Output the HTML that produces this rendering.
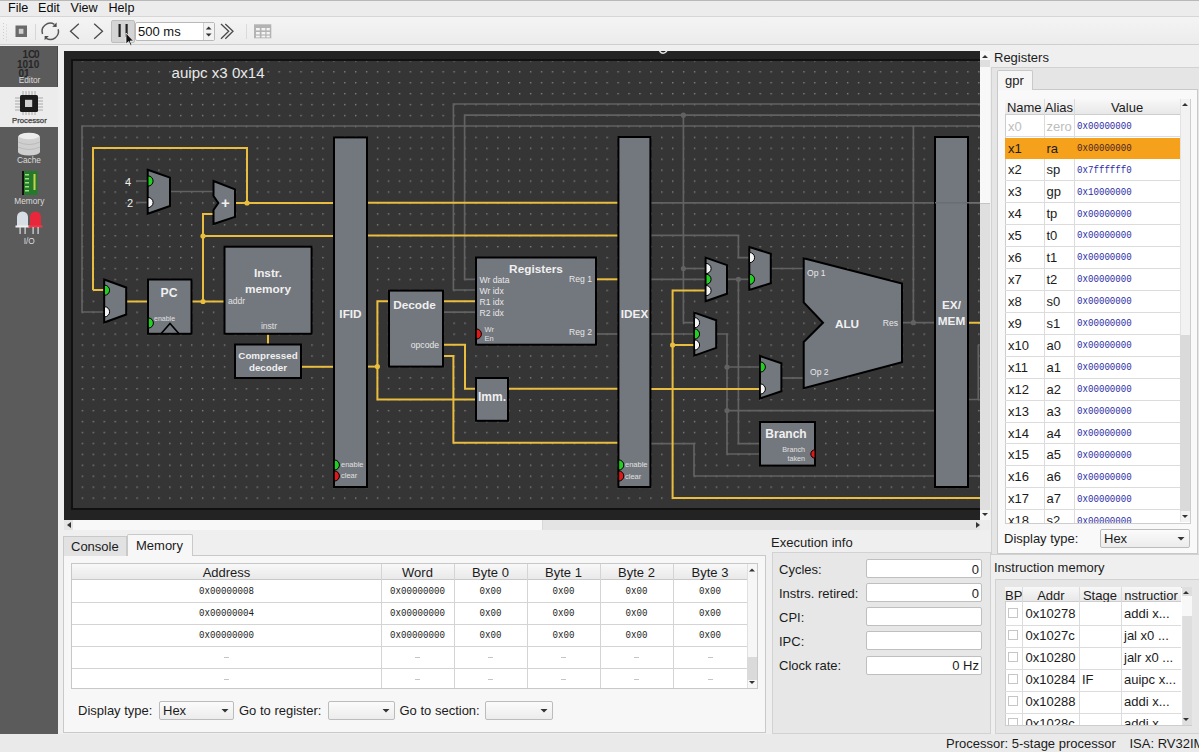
<!DOCTYPE html>
<html><head><meta charset="utf-8">
<style>
*{margin:0;padding:0;box-sizing:border-box}
html,body{width:1199px;height:752px;overflow:hidden;background:#efefef;font-family:"Liberation Sans",sans-serif;font-size:13px;color:#1b1b1b}
body{position:relative}
.a{position:absolute}
.t{position:absolute;white-space:nowrap;line-height:1}
.mono{font-family:"Liberation Mono",monospace}
</style></head><body>

<div class="a" style="left:0;top:0;width:1199px;height:1px;background:#b8b8b8"></div>
<div class="a" style="left:0;top:1px;width:1199px;height:16px;background:#ececec"></div>
<div class="a" style="left:0;top:16px;width:1199px;height:1px;background:#d6d6d6"></div>
<div class="t" style="left:8px;top:1.6px;font-size:12.6px;color:#0a0a0a">File</div>
<div class="t" style="left:38px;top:1.6px;font-size:12.6px;color:#0a0a0a">Edit</div>
<div class="t" style="left:70.5px;top:1.6px;font-size:12.6px;color:#0a0a0a">View</div>
<div class="t" style="left:108.5px;top:1.6px;font-size:12.6px;color:#0a0a0a">Help</div>
<div class="a" style="left:0;top:17px;width:1199px;height:27px;background:linear-gradient(#f4f4f4,#ececec)"></div>
<div class="a" style="left:0;top:44px;width:1199px;height:1px;background:#cfcfcf"></div>
<div class="a" style="left:111px;top:20px;width:24px;height:23px;background:#d4d4d4;border:1px solid #bdbdbd;border-radius:2px"></div>
<div class="a" style="left:135px;top:22px;width:80px;height:19px;background:#fff;border:1px solid #b9b9b9;border-radius:2px"></div>
<div class="a" style="left:203px;top:23px;width:11px;height:17px;background:#f3f3f3;border-left:1px solid #d0d0d0"></div>
<div class="t" style="left:138px;top:25px;font-size:13px;color:#111">500 ms</div>
<svg class="a" style="left:0;top:0" width="300" height="50">
<rect x="15.5" y="25.5" width="11.5" height="11.5" fill="#6a6a6a"/>
<rect x="18.8" y="28.8" width="4.6" height="5" fill="#cfcfcf"/>
<line x1="35.5" y1="24" x2="35.5" y2="40" stroke="#d6d6d6" stroke-width="1"/>
<g fill="#cdcdcd"><rect x="3" y="23" width="1" height="1"/><rect x="6" y="24.5" width="1" height="1"/><rect x="3" y="26" width="1" height="1"/><rect x="6" y="27.5" width="1" height="1"/><rect x="3" y="29" width="1" height="1"/><rect x="6" y="30.5" width="1" height="1"/><rect x="3" y="32" width="1" height="1"/><rect x="6" y="33.5" width="1" height="1"/><rect x="3" y="35" width="1" height="1"/><rect x="6" y="36.5" width="1" height="1"/><rect x="3" y="38" width="1" height="1"/><rect x="6" y="39.5" width="1" height="1"/></g>
<path d="M42.5 33.9 A8.2 8.2 0 0 1 54.4 24.3" fill="none" stroke="#575757" stroke-width="1.5"/>
<path d="M58.2 29.3 A8.2 8.2 0 0 1 46.2 38.4" fill="none" stroke="#575757" stroke-width="1.5"/>
<path d="M56.6 22.6 L56.6 26.9 L52.2 26.8 Z" fill="#4a4a4a"/>
<path d="M44.6 35.9 L48.8 36 L44.6 40.2 Z" fill="#4a4a4a"/>
<polyline points="78.8,23.8 70.5,31.3 78.8,38.8" fill="none" stroke="#4a4a4a" stroke-width="1.3"/>
<polyline points="94.2,23.8 102.5,31.3 94.2,38.8" fill="none" stroke="#4a4a4a" stroke-width="1.3"/>
<rect x="118.5" y="24" width="2.2" height="13" fill="#222"/>
<rect x="125.5" y="24" width="2.2" height="13" fill="#222"/>
<path d="M205.8 29.5 L208.7 26.5 L211.6 29.5 Z" fill="#333"/>
<path d="M205.8 33.5 L208.7 36.5 L211.6 33.5 Z" fill="#333"/>
<polyline points="221,24 228.7,31.3 221,38.7" fill="none" stroke="#4a4a4a" stroke-width="1.3"/>
<polyline points="225.3,24 233,31.3 225.3,38.7" fill="none" stroke="#4a4a4a" stroke-width="1.3"/>
<line x1="246.5" y1="24" x2="246.5" y2="39" stroke="#dadada" stroke-width="1"/>
<rect x="254" y="24.3" width="17.3" height="14" fill="#b3b3b3"/>
<g fill="#f4f4f4">
<rect x="256" y="28" width="3.8" height="2.4"/><rect x="261.5" y="28" width="3.8" height="2.4"/><rect x="266.5" y="28" width="3.3" height="2.4"/>
<rect x="256" y="32" width="3.8" height="2.4"/><rect x="261.5" y="32" width="3.8" height="2.4"/><rect x="266.5" y="32" width="3.3" height="2.4"/>
<rect x="256" y="35.6" width="3.8" height="1.8"/><rect x="261.5" y="35.6" width="3.8" height="1.8"/><rect x="266.5" y="35.6" width="3.3" height="1.8"/>
</g>
<path d="M126 33 L126 44 L128.6 41.6 L130.6 45.6 L132 45 L130 41 L133.5 41 Z" fill="#111" stroke="#fff" stroke-width="0.7"/>
</svg>
<div class="a" style="left:0;top:46px;width:58px;height:688px;background:#5b5b5b"></div>
<div class="a" style="left:0;top:87px;width:58px;height:40px;background:#ececec"></div>
<div class="a" style="left:57px;top:46px;width:1px;height:41px;background:#4a4a4a"></div>
<svg class="a" style="left:0;top:40px" width="60" height="210" viewBox="0 40 60 210">
<g font-family="Liberation Sans" font-weight="bold" fill="#262626" font-size="10">
<text x="22.5" y="58">1</text><text x="28" y="58">C</text><text x="34" y="58">0</text>
<text x="17" y="67.5">1010</text>
<text x="18.5" y="76.5">01</text>
</g>
<text x="29.5" y="83" text-anchor="middle" font-family="Liberation Sans" font-size="8.3" fill="#dcdcdc">Editor</text>
<g stroke="#9a9a9a" stroke-width="0.8">
<line x1="23" y1="91" x2="23" y2="115"/><line x1="26" y1="91" x2="26" y2="115"/><line x1="29" y1="91" x2="29" y2="115"/><line x1="32" y1="91" x2="32" y2="115"/><line x1="35" y1="91" x2="35" y2="115"/>
<line x1="15" y1="98" x2="43" y2="98"/><line x1="15" y1="101" x2="43" y2="101"/><line x1="15" y1="104" x2="43" y2="104"/><line x1="15" y1="107" x2="43" y2="107"/><line x1="15" y1="110" x2="43" y2="110"/>
</g>
<rect x="20" y="95" width="18" height="17" rx="1.5" fill="#1c1c1c"/>
<rect x="25" y="99.8" width="7.2" height="7.2" fill="#d0d0d0"/>
<text x="29.4" y="122.8" text-anchor="middle" font-family="Liberation Sans" font-size="7.7" fill="#3a3a3a" stroke="#3a3a3a" stroke-width="0.25">Processor</text>
<ellipse cx="29" cy="137" rx="11" ry="4" fill="#e6e6e6"/>
<rect x="18" y="137" width="22" height="15" fill="#cfcfcf"/>
<ellipse cx="29" cy="152" rx="11" ry="3.5" fill="#cfcfcf"/>
<ellipse cx="29" cy="136" rx="10" ry="3.3" fill="#ececec"/>
<path d="M18 142 Q29 147 40 142 M18 147 Q29 152 40 147" stroke="#b5b5b5" stroke-width="0.8" fill="none"/>
<text x="29" y="162.5" text-anchor="middle" font-family="Liberation Sans" font-size="8.3" fill="#dcdcdc">Cache</text>
<rect x="22" y="171" width="2" height="24" fill="#111"/>
<rect x="24" y="171" width="13.5" height="24" fill="#247a2a"/>
<g fill="#9be07a"><rect x="25" y="174" width="4" height="1.5"/><rect x="25" y="178" width="4" height="1.5"/><rect x="25" y="182" width="4" height="1.5"/><rect x="25" y="186" width="4" height="1.5"/><rect x="25" y="190" width="4" height="1.5"/></g>
<rect x="33.5" y="174" width="2" height="16" fill="#c9d24a"/>
<text x="29.3" y="203.5" text-anchor="middle" font-family="Liberation Sans" font-size="8.3" fill="#dcdcdc">Memory</text>
<path d="M17 226 L17 217 A5.5 5.5 0 0 1 28 217 L28 226 Z" fill="#d7dde4"/>
<rect x="15.5" y="225.5" width="14" height="2" fill="#f0f0f0"/>
<rect x="19.5" y="227" width="1.2" height="7" fill="#ddd"/><rect x="24.5" y="227" width="1.2" height="7" fill="#ddd"/>
<path d="M30 226 L30 217 A5.5 5.5 0 0 1 41 217 L41 226 Z" fill="#e8283a"/>
<rect x="28.5" y="225.5" width="14" height="2" fill="#f03a4a"/>
<rect x="32.5" y="227" width="1.2" height="7" fill="#ddd"/><rect x="37.5" y="227" width="1.2" height="7" fill="#ddd"/>
<text x="29.3" y="243.5" text-anchor="middle" font-family="Liberation Sans" font-size="8.3" fill="#dcdcdc">I/O</text>
</svg>
<div class="a" style="left:64px;top:51px;width:916px;height:469px;background:#232323"></div>
<div class="a" style="left:71px;top:59px;width:909px;height:451px;background:#111"></div>
<div class="a" style="left:73px;top:61px;width:907px;height:447px;overflow:hidden;background:#353535">
<svg class="a" style="left:-73px;top:-61px" width="1000" height="520" viewBox="0 0 1000 520">
<defs><pattern id="dots" x="81.7" y="71.1" width="10.932" height="10.93" patternUnits="userSpaceOnUse"><rect x="0" y="0" width="1.4" height="1.4" fill="#808080"/></pattern></defs>
<rect x="73" y="61" width="907" height="447" fill="url(#dots)"/>
<polyline points="1000,126 82,126 82,312 104,312" fill="none" stroke="#626262" stroke-width="1.7" stroke-linejoin="miter"/>
<polyline points="1000,104 453.4,104 453.4,290 476,290" fill="none" stroke="#626262" stroke-width="1.7" stroke-linejoin="miter"/>
<polyline points="1000,115.2 464.6,115.2 464.6,279.3 476,279.3" fill="none" stroke="#626262" stroke-width="1.7" stroke-linejoin="miter"/>
<polyline points="683.4,115.2 683.4,322.7 694,322.7" fill="none" stroke="#626262" stroke-width="1.7" stroke-linejoin="miter"/>
<polyline points="683.4,268.5 705,268.5" fill="none" stroke="#626262" stroke-width="1.7" stroke-linejoin="miter"/>
<polyline points="170,191.5 214,191.5" fill="none" stroke="#626262" stroke-width="1.7" stroke-linejoin="miter"/>
<polyline points="136,181 148,181" fill="none" stroke="#626262" stroke-width="1.7" stroke-linejoin="miter"/>
<polyline points="136,202.5 148,202.5" fill="none" stroke="#626262" stroke-width="1.7" stroke-linejoin="miter"/>
<polyline points="443,312.2 476,312.2" fill="none" stroke="#626262" stroke-width="1.7" stroke-linejoin="miter"/>
<polyline points="596,334 618,334" fill="none" stroke="#626262" stroke-width="1.7" stroke-linejoin="miter"/>
<polyline points="650,279.3 705,279.3" fill="none" stroke="#626262" stroke-width="1.7" stroke-linejoin="miter"/>
<polyline points="650,334 694,334" fill="none" stroke="#626262" stroke-width="1.7" stroke-linejoin="miter"/>
<polyline points="650,202.8 1000,202.8" fill="none" stroke="#626262" stroke-width="1.7" stroke-linejoin="miter"/>
<polyline points="650,235.4 738.4,235.4 738.4,257.6 749,257.6" fill="none" stroke="#626262" stroke-width="1.7" stroke-linejoin="miter"/>
<polyline points="738.4,279.3 738.4,443.7 760,443.7" fill="none" stroke="#626262" stroke-width="1.7" stroke-linejoin="miter"/>
<polyline points="727,279.3 749,279.3" fill="none" stroke="#626262" stroke-width="1.7" stroke-linejoin="miter"/>
<polyline points="771,268.5 804,268.5" fill="none" stroke="#626262" stroke-width="1.7" stroke-linejoin="miter"/>
<polyline points="716,334 727,334 727,454 760,454" fill="none" stroke="#626262" stroke-width="1.7" stroke-linejoin="miter"/>
<polyline points="727,367 760,367" fill="none" stroke="#626262" stroke-width="1.7" stroke-linejoin="miter"/>
<polyline points="727,410.6 935,410.6" fill="none" stroke="#626262" stroke-width="1.7" stroke-linejoin="miter"/>
<polyline points="781,378 804,378" fill="none" stroke="#626262" stroke-width="1.7" stroke-linejoin="miter"/>
<polyline points="650,443.7 694,443.7 694,476 1000,476" fill="none" stroke="#626262" stroke-width="1.7" stroke-linejoin="miter"/>
<polyline points="902,322.7 935,322.7" fill="none" stroke="#626262" stroke-width="1.7" stroke-linejoin="miter"/>
<polyline points="913.4,126 913.4,322.7" fill="none" stroke="#626262" stroke-width="1.7" stroke-linejoin="miter"/>
<polyline points="967,399.5 978.3,399.5 978.3,344.7" fill="none" stroke="#626262" stroke-width="1.7" stroke-linejoin="miter"/>
<circle cx="683.4" cy="115.2" r="2.6" fill="#626262"/>
<circle cx="683.4" cy="268.5" r="2.6" fill="#626262"/>
<circle cx="738.4" cy="279.3" r="2.6" fill="#626262"/>
<circle cx="727" cy="367" r="2.6" fill="#626262"/>
<circle cx="727" cy="410.6" r="2.6" fill="#626262"/>
<circle cx="913.4" cy="322.7" r="2.6" fill="#626262"/>
<polyline points="93,290 93,148 247,148 247,203" fill="none" stroke="#e9bd3f" stroke-width="2" stroke-linejoin="miter"/>
<polyline points="93,290 104,290" fill="none" stroke="#e9bd3f" stroke-width="2" stroke-linejoin="miter"/>
<polyline points="235,203 333,203" fill="none" stroke="#e9bd3f" stroke-width="2" stroke-linejoin="miter"/>
<polyline points="214,214 203,214 203,301.5" fill="none" stroke="#e9bd3f" stroke-width="2" stroke-linejoin="miter"/>
<polyline points="203,236 333,236" fill="none" stroke="#e9bd3f" stroke-width="2" stroke-linejoin="miter"/>
<polyline points="126,301.5 148,301.5" fill="none" stroke="#e9bd3f" stroke-width="2" stroke-linejoin="miter"/>
<polyline points="191.5,301.5 224.5,301.5" fill="none" stroke="#e9bd3f" stroke-width="2" stroke-linejoin="miter"/>
<polyline points="268,334 268,344.5" fill="none" stroke="#e9bd3f" stroke-width="2" stroke-linejoin="miter"/>
<polyline points="301,366.8 333,366.8" fill="none" stroke="#e9bd3f" stroke-width="2" stroke-linejoin="miter"/>
<polyline points="367,202.8 618,202.8" fill="none" stroke="#e9bd3f" stroke-width="2" stroke-linejoin="miter"/>
<polyline points="367,235.6 618,235.6" fill="none" stroke="#e9bd3f" stroke-width="2" stroke-linejoin="miter"/>
<polyline points="367,366.6 377.4,366.6" fill="none" stroke="#e9bd3f" stroke-width="2" stroke-linejoin="miter"/>
<polyline points="389,301.2 377.4,301.2 377.4,399.5 476,399.5" fill="none" stroke="#e9bd3f" stroke-width="2" stroke-linejoin="miter"/>
<polyline points="443,301.2 476,301.2" fill="none" stroke="#e9bd3f" stroke-width="2" stroke-linejoin="miter"/>
<polyline points="443,344.7 465,344.7 465,388.8 476,388.8" fill="none" stroke="#e9bd3f" stroke-width="2" stroke-linejoin="miter"/>
<polyline points="443,356 453.4,356 453.4,442.7 618,442.7" fill="none" stroke="#e9bd3f" stroke-width="2" stroke-linejoin="miter"/>
<polyline points="508,388.8 618,388.8" fill="none" stroke="#e9bd3f" stroke-width="2" stroke-linejoin="miter"/>
<polyline points="650,389 760,389" fill="none" stroke="#e9bd3f" stroke-width="2" stroke-linejoin="miter"/>
<polyline points="596,279.3 618,279.3" fill="none" stroke="#e9bd3f" stroke-width="2" stroke-linejoin="miter"/>
<polyline points="705,290.6 672.6,290.6 672.6,498 1000,498" fill="none" stroke="#e9bd3f" stroke-width="2" stroke-linejoin="miter"/>
<polyline points="672.6,345 694,345" fill="none" stroke="#e9bd3f" stroke-width="2" stroke-linejoin="miter"/>
<polyline points="967,322.7 1000,322.7" fill="none" stroke="#e9bd3f" stroke-width="2" stroke-linejoin="miter"/>
<circle cx="247" cy="203" r="2.6" fill="#e9bd3f"/>
<circle cx="203" cy="236" r="2.6" fill="#e9bd3f"/>
<circle cx="203" cy="301.5" r="2.6" fill="#e9bd3f"/>
<circle cx="377.4" cy="366.6" r="2.6" fill="#e9bd3f"/>
<circle cx="672.6" cy="345" r="2.6" fill="#e9bd3f"/>
<rect x="334" y="137.4" width="33" height="349.6" fill="#73777e" stroke="#000" stroke-width="2"/>
<rect x="618.4" y="137" width="32.0" height="350" fill="#73777e" stroke="#000" stroke-width="2"/>
<rect x="935" y="137" width="33" height="350" fill="#73777e" stroke="#000" stroke-width="2"/>
<rect x="476" y="257.5" width="120" height="87.19999999999999" fill="#73777e" stroke="#000" stroke-width="2"/>
<rect x="389" y="290.6" width="54" height="76.0" fill="#73777e" stroke="#000" stroke-width="2"/>
<rect x="476" y="378" width="32" height="42.80000000000001" fill="#73777e" stroke="#000" stroke-width="2"/>
<rect x="760" y="422" width="55" height="43.60000000000002" fill="#73777e" stroke="#000" stroke-width="2"/>
<rect x="148" y="279.5" width="43.5" height="54.30000000000001" fill="#73777e" stroke="#000" stroke-width="2"/>
<rect x="224.5" y="246.7" width="87.10000000000002" height="87.10000000000002" fill="#73777e" stroke="#000" stroke-width="2"/>
<rect x="235" y="344.5" width="66" height="33.5" fill="#73777e" stroke="#000" stroke-width="2"/>
<line x1="935" y1="202.8" x2="1000" y2="202.8" stroke="#6a6d72" stroke-width="1.5"/>
<polygon points="147.7,169.8 170,177.60000000000002 170,206.0 147.7,213.8" fill="#73777e" stroke="#000" stroke-width="2" stroke-linejoin="miter"/>
<path d="M148 175.9 A5.1 5.1 0 0 1 148 186.1 Z" fill="#22d022" stroke="#000" stroke-width="1"/>
<path d="M148 197.4 A5.1 5.1 0 0 1 148 207.6 Z" fill="#f4f4f4" stroke="#000" stroke-width="1"/>
<polygon points="104.2,279.5 126.2,287.5 126.2,314.5 104.2,322.5" fill="#73777e" stroke="#000" stroke-width="2" stroke-linejoin="miter"/>
<path d="M104.5 285.09999999999997 A5.1 5.1 0 0 1 104.5 295.3 Z" fill="#22d022" stroke="#000" stroke-width="1"/>
<path d="M104.5 306.7 A5.1 5.1 0 0 1 104.5 316.90000000000003 Z" fill="#f4f4f4" stroke="#000" stroke-width="1"/>
<polygon points="705.6,257.6 727,265.1 727,293.8 705.6,301.3" fill="#73777e" stroke="#000" stroke-width="2" stroke-linejoin="miter"/>
<path d="M706 263.4 A5.1 5.1 0 0 1 706 273.6 Z" fill="#f4f4f4" stroke="#000" stroke-width="1"/>
<path d="M706 274.2 A5.1 5.1 0 0 1 706 284.40000000000003 Z" fill="#22d022" stroke="#000" stroke-width="1"/>
<path d="M706 285.5 A5.1 5.1 0 0 1 706 295.70000000000005 Z" fill="#f4f4f4" stroke="#000" stroke-width="1"/>
<polygon points="749.3,247 770.8,253.7 770.8,283.3 749.3,290" fill="#73777e" stroke="#000" stroke-width="2" stroke-linejoin="miter"/>
<path d="M749.5 252.50000000000003 A5.1 5.1 0 0 1 749.5 262.70000000000005 Z" fill="#f4f4f4" stroke="#000" stroke-width="1"/>
<path d="M749.5 274.2 A5.1 5.1 0 0 1 749.5 284.40000000000003 Z" fill="#22d022" stroke="#000" stroke-width="1"/>
<polygon points="694.3,312.6 716.2,320.3 716.2,347.90000000000003 694.3,355.6" fill="#73777e" stroke="#000" stroke-width="2" stroke-linejoin="miter"/>
<path d="M694.5 317.59999999999997 A5.1 5.1 0 0 1 694.5 327.8 Z" fill="#f4f4f4" stroke="#000" stroke-width="1"/>
<path d="M694.5 328.9 A5.1 5.1 0 0 1 694.5 339.1 Z" fill="#22d022" stroke="#000" stroke-width="1"/>
<path d="M694.5 339.9 A5.1 5.1 0 0 1 694.5 350.1 Z" fill="#f4f4f4" stroke="#000" stroke-width="1"/>
<polygon points="760,356 781.4,363.3 781.4,391.2 760,398.5" fill="#73777e" stroke="#000" stroke-width="2" stroke-linejoin="miter"/>
<path d="M760.3 361.9 A5.1 5.1 0 0 1 760.3 372.1 Z" fill="#22d022" stroke="#000" stroke-width="1"/>
<path d="M760.3 383.9 A5.1 5.1 0 0 1 760.3 394.1 Z" fill="#f4f4f4" stroke="#000" stroke-width="1"/>
<polygon points="213.5,181 235,189.4 235,216.9 213.5,224 213.5,210 218.3,203 213.5,196" fill="#73777e" stroke="#000" stroke-width="2" stroke-linejoin="miter"/>
<polygon points="803.7,258.3 902,283.6 902,362.3 803.7,388.3 803.7,342 823,322.7 803.7,302.4" fill="#73777e" stroke="#000" stroke-width="2" stroke-linejoin="miter"/>
<polyline points="161,333.8 170,323.5 179,333.8" fill="none" stroke="#000" stroke-width="1.6"/>
<path d="M148.3 317.9 A5.1 5.1 0 0 1 148.3 328.1 Z" fill="#22d022" stroke="#000" stroke-width="1"/>
<path d="M334.3 459.9 A5.1 5.1 0 0 1 334.3 470.1 Z" fill="#22d022" stroke="#000" stroke-width="1"/>
<path d="M334.3 470.9 A5.1 5.1 0 0 1 334.3 481.1 Z" fill="#e01818" stroke="#000" stroke-width="1"/>
<path d="M618.7 459.9 A5.1 5.1 0 0 1 618.7 470.1 Z" fill="#22d022" stroke="#000" stroke-width="1"/>
<path d="M618.7 470.9 A5.1 5.1 0 0 1 618.7 481.1 Z" fill="#e01818" stroke="#000" stroke-width="1"/>
<path d="M476.3 328.9 A5.1 5.1 0 0 1 476.3 339.1 Z" fill="#e01818" stroke="#000" stroke-width="1"/>
<path d="M815 449.8 A4.2 4.2 0 0 0 815 458.2 Z" fill="#e01818" stroke="#000" stroke-width="1"/>
<text x="171.5" y="78" font-family="Liberation Sans" font-size="15.1" text-anchor="start" fill="#e8e8e8">auipc x3 0x14</text>
<text x="125" y="185.5" font-family="Liberation Sans" font-size="11" text-anchor="start" fill="#f0f0f0">4</text>
<text x="127" y="207" font-family="Liberation Sans" font-size="11" text-anchor="start" fill="#f0f0f0">2</text>
<text x="225.5" y="208" font-family="Liberation Sans" font-size="15" text-anchor="middle" fill="#f0f0f0" font-weight="bold">+</text>
<text x="169" y="296.8" font-family="Liberation Sans" font-size="12.2" text-anchor="middle" fill="#f0f0f0" font-weight="bold">PC</text>
<text x="154" y="320.5" font-family="Liberation Sans" font-size="7" text-anchor="start" fill="#e0e0e0">enable</text>
<text x="268" y="277" font-family="Liberation Sans" font-size="11.8" text-anchor="middle" fill="#f0f0f0" font-weight="bold">Instr.</text>
<text x="268" y="293" font-family="Liberation Sans" font-size="11.8" text-anchor="middle" fill="#f0f0f0" font-weight="bold">memory</text>
<text x="228" y="304" font-family="Liberation Sans" font-size="8.6" text-anchor="start" fill="#e0e0e0">addr</text>
<text x="269" y="328.5" font-family="Liberation Sans" font-size="8.6" text-anchor="middle" fill="#e0e0e0">instr</text>
<text x="268" y="358.5" font-family="Liberation Sans" font-size="9.8" text-anchor="middle" fill="#f0f0f0" font-weight="bold">Compressed</text>
<text x="268" y="371" font-family="Liberation Sans" font-size="9.8" text-anchor="middle" fill="#f0f0f0" font-weight="bold">decoder</text>
<text x="350.5" y="317.5" font-family="Liberation Sans" font-size="11.8" text-anchor="middle" fill="#f0f0f0" font-weight="bold">IFID</text>
<text x="634.5" y="317.5" font-family="Liberation Sans" font-size="11.8" text-anchor="middle" fill="#f0f0f0" font-weight="bold">IDEX</text>
<text x="951.5" y="308.5" font-family="Liberation Sans" font-size="11.8" text-anchor="middle" fill="#f0f0f0" font-weight="bold">EX/</text>
<text x="951.5" y="324.5" font-family="Liberation Sans" font-size="11.8" text-anchor="middle" fill="#f0f0f0" font-weight="bold">MEM</text>
<text x="536" y="273" font-family="Liberation Sans" font-size="11.8" text-anchor="middle" fill="#f0f0f0" font-weight="bold">Registers</text>
<text x="479.5" y="282.6" font-family="Liberation Sans" font-size="8.6" text-anchor="start" fill="#e8e8e8">Wr data</text>
<text x="479.5" y="293.6" font-family="Liberation Sans" font-size="8.6" text-anchor="start" fill="#e8e8e8">Wr idx</text>
<text x="479.5" y="304.6" font-family="Liberation Sans" font-size="8.6" text-anchor="start" fill="#e8e8e8">R1 idx</text>
<text x="479.5" y="315.6" font-family="Liberation Sans" font-size="8.6" text-anchor="start" fill="#e8e8e8">R2 idx</text>
<text x="592" y="281.5" font-family="Liberation Sans" font-size="8.6" text-anchor="end" fill="#e8e8e8">Reg 1</text>
<text x="592" y="335.3" font-family="Liberation Sans" font-size="8.6" text-anchor="end" fill="#e8e8e8">Reg 2</text>
<text x="484.5" y="332" font-family="Liberation Sans" font-size="7.5" text-anchor="start" fill="#e0e0e0">Wr</text>
<text x="484.5" y="341" font-family="Liberation Sans" font-size="7.5" text-anchor="start" fill="#e0e0e0">En</text>
<text x="414.5" y="309" font-family="Liberation Sans" font-size="11.8" text-anchor="middle" fill="#f0f0f0" font-weight="bold">Decode</text>
<text x="439" y="347.5" font-family="Liberation Sans" font-size="8.6" text-anchor="end" fill="#e8e8e8">opcode</text>
<text x="492" y="401" font-family="Liberation Sans" font-size="12" text-anchor="middle" fill="#f0f0f0" font-weight="bold">Imm.</text>
<text x="786" y="437.5" font-family="Liberation Sans" font-size="12" text-anchor="middle" fill="#f0f0f0" font-weight="bold">Branch</text>
<text x="805" y="451.7" font-family="Liberation Sans" font-size="7.2" text-anchor="end" fill="#e0e0e0">Branch</text>
<text x="805" y="460.5" font-family="Liberation Sans" font-size="7.2" text-anchor="end" fill="#e0e0e0">taken</text>
<text x="847" y="327.5" font-family="Liberation Sans" font-size="11.8" text-anchor="middle" fill="#f0f0f0" font-weight="bold">ALU</text>
<text x="807" y="275.5" font-family="Liberation Sans" font-size="8.6" text-anchor="start" fill="#e8e8e8">Op 1</text>
<text x="810" y="374.5" font-family="Liberation Sans" font-size="8.6" text-anchor="start" fill="#e8e8e8">Op 2</text>
<text x="898" y="326" font-family="Liberation Sans" font-size="8.6" text-anchor="end" fill="#e8e8e8">Res</text>
<text x="341" y="466.8" font-family="Liberation Sans" font-size="7.5" text-anchor="start" fill="#e0e0e0">enable</text>
<text x="341" y="478" font-family="Liberation Sans" font-size="7.5" text-anchor="start" fill="#e0e0e0">clear</text>
<text x="625" y="467.3" font-family="Liberation Sans" font-size="7.5" text-anchor="start" fill="#e0e0e0">enable</text>
<text x="625" y="479" font-family="Liberation Sans" font-size="7.5" text-anchor="start" fill="#e0e0e0">clear</text>
</svg>
</div>
<div class="a" style="left:64px;top:520px;width:916px;height:10px;background:#e4e4e4"></div>
<div class="a" style="left:73px;top:520px;width:470px;height:10px;background:#f8f8f8;border-right:1px solid #d8d8d8"></div>
<svg class="a" style="left:63px;top:520px" width="927" height="10"><path d="M4 5 L8 2 L8 8 Z" fill="#333"/><path d="M913 2 L917 5 L913 8 Z" fill="#333"/></svg>
<div class="a" style="left:980px;top:51px;width:10px;height:469px;background:#dfdfdf"></div>
<div class="a" style="left:980px;top:51px;width:10px;height:9px;background:#f6f6f6"></div>
<div class="a" style="left:980px;top:510px;width:10px;height:10px;background:#f6f6f6"></div>
<div class="a" style="left:980px;top:66.5px;width:10px;height:137px;background:#f8f8f8;border-bottom:1px solid #c4c4c4"></div>
<svg class="a" style="left:980px;top:51px" width="10" height="470"><path d="M2 7 L5 4 L8 7 Z" fill="#333"/><path d="M2 462 L5 465 L8 462 Z" fill="#333"/></svg>
<div class="a" style="left:980px;top:520px;width:10px;height:10px;background:#ececec"></div>
<div class="a" style="left:63px;top:555px;width:703px;height:178px;background:#f7f7f7;border:1px solid #c9c9c9"></div>
<div class="a" style="left:63px;top:536px;width:64px;height:20px;background:#e2e2e2;border:1px solid #c9c9c9;border-bottom:none"></div>
<div class="a" style="left:127px;top:534px;width:66px;height:22px;background:#f7f7f7;border:1px solid #c9c9c9;border-bottom:none;border-radius:2px 2px 0 0"></div>
<div class="t" style="left:71px;top:540px;font-size:13px;color:#1b1b1b">Console</div>
<div class="t" style="left:136px;top:539px;font-size:13px;color:#1b1b1b">Memory</div>
<div class="a" style="left:71px;top:563px;width:687px;height:126px;background:#fff;border:1px solid #c8c8c8"></div>
<div class="a" style="left:72px;top:564px;width:675px;height:16px;background:linear-gradient(#f8f8f8,#e9e9e9);border-bottom:1px solid #c8c8c8"></div>
<div class="t" style="left:72px;width:309px;top:566px;text-align:center;font-size:13px;color:#1b1b1b">Address</div>
<div class="t" style="left:381px;width:73px;top:566px;text-align:center;font-size:13px;color:#1b1b1b">Word</div>
<div class="t" style="left:454px;width:73px;top:566px;text-align:center;font-size:13px;color:#1b1b1b">Byte 0</div>
<div class="t" style="left:527px;width:73px;top:566px;text-align:center;font-size:13px;color:#1b1b1b">Byte 1</div>
<div class="t" style="left:600px;width:73px;top:566px;text-align:center;font-size:13px;color:#1b1b1b">Byte 2</div>
<div class="t" style="left:673px;width:74px;top:566px;text-align:center;font-size:13px;color:#1b1b1b">Byte 3</div>
<div class="a" style="left:381px;top:564px;width:1px;height:124px;background:#d4d4d4"></div>
<div class="a" style="left:454px;top:564px;width:1px;height:124px;background:#d4d4d4"></div>
<div class="a" style="left:527px;top:564px;width:1px;height:124px;background:#d4d4d4"></div>
<div class="a" style="left:600px;top:564px;width:1px;height:124px;background:#d4d4d4"></div>
<div class="a" style="left:673px;top:564px;width:1px;height:124px;background:#d4d4d4"></div>
<div class="a" style="left:747px;top:564px;width:1px;height:124px;background:#d4d4d4"></div>
<div class="t mono" style="left:72px;width:309px;top:586.1px;text-align:center;font-size:11px;transform:scaleX(0.83);color:#1a1a1a">0x00000008</div>
<div class="t mono" style="left:381px;width:73px;top:586.1px;text-align:center;font-size:11px;transform:scaleX(0.83);color:#1a1a1a">0x00000000</div>
<div class="t mono" style="left:454px;width:73px;top:586.1px;text-align:center;font-size:11px;transform:scaleX(0.83);color:#1a1a1a">0x00</div>
<div class="t mono" style="left:527px;width:73px;top:586.1px;text-align:center;font-size:11px;transform:scaleX(0.83);color:#1a1a1a">0x00</div>
<div class="t mono" style="left:600px;width:73px;top:586.1px;text-align:center;font-size:11px;transform:scaleX(0.83);color:#1a1a1a">0x00</div>
<div class="t mono" style="left:673px;width:74px;top:586.1px;text-align:center;font-size:11px;transform:scaleX(0.83);color:#1a1a1a">0x00</div>
<div class="a" style="left:72px;top:602px;width:675px;height:1px;background:#d4d4d4"></div>
<div class="t mono" style="left:72px;width:309px;top:607.9px;text-align:center;font-size:11px;transform:scaleX(0.83);color:#1a1a1a">0x00000004</div>
<div class="t mono" style="left:381px;width:73px;top:607.9px;text-align:center;font-size:11px;transform:scaleX(0.83);color:#1a1a1a">0x00000000</div>
<div class="t mono" style="left:454px;width:73px;top:607.9px;text-align:center;font-size:11px;transform:scaleX(0.83);color:#1a1a1a">0x00</div>
<div class="t mono" style="left:527px;width:73px;top:607.9px;text-align:center;font-size:11px;transform:scaleX(0.83);color:#1a1a1a">0x00</div>
<div class="t mono" style="left:600px;width:73px;top:607.9px;text-align:center;font-size:11px;transform:scaleX(0.83);color:#1a1a1a">0x00</div>
<div class="t mono" style="left:673px;width:74px;top:607.9px;text-align:center;font-size:11px;transform:scaleX(0.83);color:#1a1a1a">0x00</div>
<div class="a" style="left:72px;top:624px;width:675px;height:1px;background:#d4d4d4"></div>
<div class="t mono" style="left:72px;width:309px;top:629.9px;text-align:center;font-size:11px;transform:scaleX(0.83);color:#1a1a1a">0x00000000</div>
<div class="t mono" style="left:381px;width:73px;top:629.9px;text-align:center;font-size:11px;transform:scaleX(0.83);color:#1a1a1a">0x00000000</div>
<div class="t mono" style="left:454px;width:73px;top:629.9px;text-align:center;font-size:11px;transform:scaleX(0.83);color:#1a1a1a">0x00</div>
<div class="t mono" style="left:527px;width:73px;top:629.9px;text-align:center;font-size:11px;transform:scaleX(0.83);color:#1a1a1a">0x00</div>
<div class="t mono" style="left:600px;width:73px;top:629.9px;text-align:center;font-size:11px;transform:scaleX(0.83);color:#1a1a1a">0x00</div>
<div class="t mono" style="left:673px;width:74px;top:629.9px;text-align:center;font-size:11px;transform:scaleX(0.83);color:#1a1a1a">0x00</div>
<div class="a" style="left:72px;top:646px;width:675px;height:1px;background:#d4d4d4"></div>
<div class="a" style="left:224.0px;top:656.8px;width:5px;height:1px;background:#c4c4c4"></div>
<div class="a" style="left:415.0px;top:656.8px;width:5px;height:1px;background:#c4c4c4"></div>
<div class="a" style="left:488.0px;top:656.8px;width:5px;height:1px;background:#c4c4c4"></div>
<div class="a" style="left:561.0px;top:656.8px;width:5px;height:1px;background:#c4c4c4"></div>
<div class="a" style="left:634.0px;top:656.8px;width:5px;height:1px;background:#c4c4c4"></div>
<div class="a" style="left:707.5px;top:656.8px;width:5px;height:1px;background:#c4c4c4"></div>
<div class="a" style="left:72px;top:668px;width:675px;height:1px;background:#d4d4d4"></div>
<div class="a" style="left:224.0px;top:678.8px;width:5px;height:1px;background:#c4c4c4"></div>
<div class="a" style="left:415.0px;top:678.8px;width:5px;height:1px;background:#c4c4c4"></div>
<div class="a" style="left:488.0px;top:678.8px;width:5px;height:1px;background:#c4c4c4"></div>
<div class="a" style="left:561.0px;top:678.8px;width:5px;height:1px;background:#c4c4c4"></div>
<div class="a" style="left:634.0px;top:678.8px;width:5px;height:1px;background:#c4c4c4"></div>
<div class="a" style="left:707.5px;top:678.8px;width:5px;height:1px;background:#c4c4c4"></div>
<div class="a" style="left:747px;top:564px;width:10px;height:124px;background:#f6f6f6;border-left:1px solid #e0e0e0"></div>
<div class="a" style="left:747px;top:656.5px;width:10px;height:23.5px;background:#dadada"></div>
<svg class="a" style="left:747px;top:564px" width="10" height="124"><path d="M2 7.5 L5 4.5 L8 7.5 Z" fill="#333"/><path d="M2 117 L5 120 L8 117 Z" fill="#333"/></svg>
<div class="t" style="left:78px;top:704px;font-size:13px">Display type:</div>
<div class="a" style="left:159px;top:700.5px;width:75px;height:19px;background:linear-gradient(#fbfbfb,#ececec);border:1px solid #bcbcbc;border-radius:2px"></div>
<div class="t" style="left:163px;top:703.5px;font-size:13px;color:#1b1b1b">Hex</div>
<svg class="a" style="left:221px;top:707.5px" width="8" height="5"><path d="M0.5 1 L7.5 1 L4 4.5 Z" fill="#333"/></svg>
<div class="t" style="left:239px;top:704px;font-size:13px">Go to register:</div>
<div class="a" style="left:327.5px;top:700.5px;width:67px;height:19px;background:linear-gradient(#fbfbfb,#ececec);border:1px solid #bcbcbc;border-radius:2px"></div>
<svg class="a" style="left:381.5px;top:707.5px" width="8" height="5"><path d="M0.5 1 L7.5 1 L4 4.5 Z" fill="#333"/></svg>
<div class="t" style="left:399.5px;top:704px;font-size:13px">Go to section:</div>
<div class="a" style="left:485px;top:700.5px;width:68px;height:19px;background:linear-gradient(#fbfbfb,#ececec);border:1px solid #bcbcbc;border-radius:2px"></div>
<svg class="a" style="left:540px;top:707.5px" width="8" height="5"><path d="M0.5 1 L7.5 1 L4 4.5 Z" fill="#333"/></svg>
<div class="t" style="left:771px;top:535.5px;font-size:13px">Execution info</div>
<div class="a" style="left:771.5px;top:551.5px;width:219px;height:182px;background:#e7e7e7;border:1px solid #d2d2d2"></div>
<div class="t" style="left:779px;top:562.5px;font-size:13px">Cycles:</div>
<div class="a" style="left:866px;top:559.0px;width:116px;height:19px;background:#fff;border:1px solid #bfbfbf;border-radius:2px"></div>
<div class="t" style="left:866px;width:113px;top:562.5px;text-align:right;font-size:13px">0</div>
<div class="t" style="left:779px;top:586.65px;font-size:13px">Instrs. retired:</div>
<div class="a" style="left:866px;top:583.15px;width:116px;height:19px;background:#fff;border:1px solid #bfbfbf;border-radius:2px"></div>
<div class="t" style="left:866px;width:113px;top:586.65px;text-align:right;font-size:13px">0</div>
<div class="t" style="left:779px;top:610.8px;font-size:13px">CPI:</div>
<div class="a" style="left:866px;top:607.3px;width:116px;height:19px;background:#fff;border:1px solid #bfbfbf;border-radius:2px"></div>
<div class="t" style="left:779px;top:634.95px;font-size:13px">IPC:</div>
<div class="a" style="left:866px;top:631.45px;width:116px;height:19px;background:#fff;border:1px solid #bfbfbf;border-radius:2px"></div>
<div class="t" style="left:779px;top:659.1px;font-size:13px">Clock rate:</div>
<div class="a" style="left:866px;top:655.6px;width:116px;height:19px;background:#fff;border:1px solid #bfbfbf;border-radius:2px"></div>
<div class="t" style="left:866px;width:113px;top:659.1px;text-align:right;font-size:13px">0 Hz</div>
<div class="t" style="left:994px;top:51px;font-size:13px">Registers</div>
<div class="a" style="left:990.5px;top:67px;width:220px;height:488px;background:#e5e5e5;border:1px solid #d2d2d2"></div>
<div class="a" style="left:996.5px;top:89px;width:201px;height:464.5px;background:#f9f9f9;border:1px solid #c9c9c9"></div>
<div class="a" style="left:996.5px;top:69.5px;width:36.5px;height:20.5px;background:#f6f6f6;border:1px solid #c9c9c9;border-bottom:none;border-radius:2px 2px 0 0"></div>
<div class="t" style="left:1005px;top:74px;font-size:13px">gpr</div>
<div class="a" style="left:1004.5px;top:98.5px;width:186px;height:425px;background:#fff;border:1px solid #cdcdcd"></div>
<div class="a" style="left:1005px;top:99px;width:175px;height:15.5px;background:linear-gradient(#f8f8f8,#e8e8e8);border-bottom:1px solid #cdcdcd"></div>
<div class="t" style="left:1005px;width:38.5px;top:100.5px;text-align:center;font-size:13px">Name</div>
<div class="t" style="left:1043.5px;width:30.90000000000009px;top:100.5px;text-align:center;font-size:13px">Alias</div>
<div class="t" style="left:1074.4px;width:105.29999999999995px;top:100.5px;text-align:center;font-size:13px">Value</div>
<div class="t" style="left:1008px;top:119.5px;font-size:13px;color:#bdbdbd">x0</div>
<div class="t" style="left:1046.5px;top:119.5px;font-size:13px;color:#bdbdbd">zero</div>
<div class="t mono" style="left:1077px;top:120.8px;font-size:11px;transform:scaleX(0.83);transform-origin:0 0;color:#2b2ba6">0x00000000</div>
<div class="a" style="left:1005px;top:136px;width:175px;height:1px;background:#dcdcdc"></div>
<div class="t" style="left:1008px;top:141.43px;font-size:13px;color:#1b1b1b">x1</div>
<div class="t" style="left:1046.5px;top:141.43px;font-size:13px;color:#1b1b1b">ra</div>
<div class="t mono" style="left:1077px;top:142.73000000000002px;font-size:11px;transform:scaleX(0.83);transform-origin:0 0;color:#3b1e2a">0x00000000</div>
<div class="a" style="left:1005px;top:158px;width:175px;height:1px;background:#dcdcdc"></div>
<div class="t" style="left:1008px;top:163.36px;font-size:13px;color:#1b1b1b">x2</div>
<div class="t" style="left:1046.5px;top:163.36px;font-size:13px;color:#1b1b1b">sp</div>
<div class="t mono" style="left:1077px;top:164.66000000000003px;font-size:11px;transform:scaleX(0.83);transform-origin:0 0;color:#2b2ba6">0x7ffffff0</div>
<div class="a" style="left:1005px;top:180px;width:175px;height:1px;background:#dcdcdc"></div>
<div class="t" style="left:1008px;top:185.29px;font-size:13px;color:#1b1b1b">x3</div>
<div class="t" style="left:1046.5px;top:185.29px;font-size:13px;color:#1b1b1b">gp</div>
<div class="t mono" style="left:1077px;top:186.59px;font-size:11px;transform:scaleX(0.83);transform-origin:0 0;color:#2b2ba6">0x10000000</div>
<div class="a" style="left:1005px;top:202px;width:175px;height:1px;background:#dcdcdc"></div>
<div class="t" style="left:1008px;top:207.22px;font-size:13px;color:#1b1b1b">x4</div>
<div class="t" style="left:1046.5px;top:207.22px;font-size:13px;color:#1b1b1b">tp</div>
<div class="t mono" style="left:1077px;top:208.52px;font-size:11px;transform:scaleX(0.83);transform-origin:0 0;color:#2b2ba6">0x00000000</div>
<div class="a" style="left:1005px;top:224px;width:175px;height:1px;background:#dcdcdc"></div>
<div class="t" style="left:1008px;top:229.15px;font-size:13px;color:#1b1b1b">x5</div>
<div class="t" style="left:1046.5px;top:229.15px;font-size:13px;color:#1b1b1b">t0</div>
<div class="t mono" style="left:1077px;top:230.45000000000002px;font-size:11px;transform:scaleX(0.83);transform-origin:0 0;color:#2b2ba6">0x00000000</div>
<div class="a" style="left:1005px;top:246px;width:175px;height:1px;background:#dcdcdc"></div>
<div class="t" style="left:1008px;top:251.07999999999998px;font-size:13px;color:#1b1b1b">x6</div>
<div class="t" style="left:1046.5px;top:251.07999999999998px;font-size:13px;color:#1b1b1b">t1</div>
<div class="t mono" style="left:1077px;top:252.38px;font-size:11px;transform:scaleX(0.83);transform-origin:0 0;color:#2b2ba6">0x00000000</div>
<div class="a" style="left:1005px;top:268px;width:175px;height:1px;background:#dcdcdc"></div>
<div class="t" style="left:1008px;top:273.01px;font-size:13px;color:#1b1b1b">x7</div>
<div class="t" style="left:1046.5px;top:273.01px;font-size:13px;color:#1b1b1b">t2</div>
<div class="t mono" style="left:1077px;top:274.31px;font-size:11px;transform:scaleX(0.83);transform-origin:0 0;color:#2b2ba6">0x00000000</div>
<div class="a" style="left:1005px;top:290px;width:175px;height:1px;background:#dcdcdc"></div>
<div class="t" style="left:1008px;top:294.94px;font-size:13px;color:#1b1b1b">x8</div>
<div class="t" style="left:1046.5px;top:294.94px;font-size:13px;color:#1b1b1b">s0</div>
<div class="t mono" style="left:1077px;top:296.24px;font-size:11px;transform:scaleX(0.83);transform-origin:0 0;color:#2b2ba6">0x00000000</div>
<div class="a" style="left:1005px;top:312px;width:175px;height:1px;background:#dcdcdc"></div>
<div class="t" style="left:1008px;top:316.87px;font-size:13px;color:#1b1b1b">x9</div>
<div class="t" style="left:1046.5px;top:316.87px;font-size:13px;color:#1b1b1b">s1</div>
<div class="t mono" style="left:1077px;top:318.17px;font-size:11px;transform:scaleX(0.83);transform-origin:0 0;color:#2b2ba6">0x00000000</div>
<div class="a" style="left:1005px;top:334px;width:175px;height:1px;background:#dcdcdc"></div>
<div class="t" style="left:1008px;top:338.8px;font-size:13px;color:#1b1b1b">x10</div>
<div class="t" style="left:1046.5px;top:338.8px;font-size:13px;color:#1b1b1b">a0</div>
<div class="t mono" style="left:1077px;top:340.1px;font-size:11px;transform:scaleX(0.83);transform-origin:0 0;color:#2b2ba6">0x00000000</div>
<div class="a" style="left:1005px;top:356px;width:175px;height:1px;background:#dcdcdc"></div>
<div class="t" style="left:1008px;top:360.73px;font-size:13px;color:#1b1b1b">x11</div>
<div class="t" style="left:1046.5px;top:360.73px;font-size:13px;color:#1b1b1b">a1</div>
<div class="t mono" style="left:1077px;top:362.03000000000003px;font-size:11px;transform:scaleX(0.83);transform-origin:0 0;color:#2b2ba6">0x00000000</div>
<div class="a" style="left:1005px;top:378px;width:175px;height:1px;background:#dcdcdc"></div>
<div class="t" style="left:1008px;top:382.65999999999997px;font-size:13px;color:#1b1b1b">x12</div>
<div class="t" style="left:1046.5px;top:382.65999999999997px;font-size:13px;color:#1b1b1b">a2</div>
<div class="t mono" style="left:1077px;top:383.96px;font-size:11px;transform:scaleX(0.83);transform-origin:0 0;color:#2b2ba6">0x00000000</div>
<div class="a" style="left:1005px;top:400px;width:175px;height:1px;background:#dcdcdc"></div>
<div class="t" style="left:1008px;top:404.59px;font-size:13px;color:#1b1b1b">x13</div>
<div class="t" style="left:1046.5px;top:404.59px;font-size:13px;color:#1b1b1b">a3</div>
<div class="t mono" style="left:1077px;top:405.89px;font-size:11px;transform:scaleX(0.83);transform-origin:0 0;color:#2b2ba6">0x00000000</div>
<div class="a" style="left:1005px;top:422px;width:175px;height:1px;background:#dcdcdc"></div>
<div class="t" style="left:1008px;top:426.52px;font-size:13px;color:#1b1b1b">x14</div>
<div class="t" style="left:1046.5px;top:426.52px;font-size:13px;color:#1b1b1b">a4</div>
<div class="t mono" style="left:1077px;top:427.82px;font-size:11px;transform:scaleX(0.83);transform-origin:0 0;color:#2b2ba6">0x00000000</div>
<div class="a" style="left:1005px;top:443px;width:175px;height:1px;background:#dcdcdc"></div>
<div class="t" style="left:1008px;top:448.45px;font-size:13px;color:#1b1b1b">x15</div>
<div class="t" style="left:1046.5px;top:448.45px;font-size:13px;color:#1b1b1b">a5</div>
<div class="t mono" style="left:1077px;top:449.75px;font-size:11px;transform:scaleX(0.83);transform-origin:0 0;color:#2b2ba6">0x00000000</div>
<div class="a" style="left:1005px;top:465px;width:175px;height:1px;background:#dcdcdc"></div>
<div class="t" style="left:1008px;top:470.38px;font-size:13px;color:#1b1b1b">x16</div>
<div class="t" style="left:1046.5px;top:470.38px;font-size:13px;color:#1b1b1b">a6</div>
<div class="t mono" style="left:1077px;top:471.68px;font-size:11px;transform:scaleX(0.83);transform-origin:0 0;color:#2b2ba6">0x00000000</div>
<div class="a" style="left:1005px;top:487px;width:175px;height:1px;background:#dcdcdc"></div>
<div class="t" style="left:1008px;top:492.31px;font-size:13px;color:#1b1b1b">x17</div>
<div class="t" style="left:1046.5px;top:492.31px;font-size:13px;color:#1b1b1b">a7</div>
<div class="t mono" style="left:1077px;top:493.61px;font-size:11px;transform:scaleX(0.83);transform-origin:0 0;color:#2b2ba6">0x00000000</div>
<div class="a" style="left:1005px;top:509px;width:175px;height:1px;background:#dcdcdc"></div>
<div class="t" style="left:1008px;top:514.24px;font-size:13px;color:#1b1b1b">x18</div>
<div class="t" style="left:1046.5px;top:514.24px;font-size:13px;color:#1b1b1b">s2</div>
<div class="t mono" style="left:1077px;top:515.54px;font-size:11px;transform:scaleX(0.83);transform-origin:0 0;color:#2b2ba6">0x00000000</div>
<div class="a" style="left:1044px;top:99px;width:1px;height:424px;background:#dcdcdc"></div>
<div class="a" style="left:1074px;top:99px;width:1px;height:424px;background:#dcdcdc"></div>
<div class="a" style="left:1005px;top:137.5px;width:175px;height:21.5px;background:#f5a11c"></div>
<div class="t" style="left:1008px;top:141.5px;font-size:13px;color:#1b1b1b">x1</div><div class="t" style="left:1046.5px;top:141.5px;font-size:13px;color:#1b1b1b">ra</div><div class="t mono" style="left:1077px;top:142.8px;font-size:11px;transform:scaleX(0.83);transform-origin:0 0;color:#4a1e24">0x00000000</div>
<div class="a" style="left:1005px;top:523.5px;width:186px;height:29px;background:#f9f9f9"></div>
<div class="a" style="left:1004.5px;top:522.5px;width:186px;height:1px;background:#cdcdcd"></div>
<div class="a" style="left:1180px;top:99px;width:10px;height:423px;background:#f2f2f2;border-left:1px solid #e2e2e2"></div>
<div class="a" style="left:1180px;top:335px;width:10px;height:176px;background:#dadada"></div>
<svg class="a" style="left:1180px;top:99px" width="10" height="424"><path d="M2 7 L5 4 L8 7 Z" fill="#333"/><path d="M2 416 L5 419 L8 416 Z" fill="#333"/></svg>
<div class="t" style="left:1004px;top:531.5px;font-size:13px">Display type:</div>
<div class="a" style="left:1100px;top:528.5px;width:90px;height:19px;background:linear-gradient(#fbfbfb,#ececec);border:1px solid #bcbcbc;border-radius:2px"></div>
<div class="t" style="left:1104px;top:531.5px;font-size:13px;color:#1b1b1b">Hex</div>
<svg class="a" style="left:1177px;top:535.5px" width="8" height="5"><path d="M0.5 1 L7.5 1 L4 4.5 Z" fill="#333"/></svg>
<div class="t" style="left:994px;top:560.5px;font-size:13px">Instruction memory</div>
<div class="a" style="left:995px;top:578.5px;width:210px;height:155px;background:#e6e6e6;border:1px solid #d2d2d2"></div>
<div class="a" style="left:1004.5px;top:586.5px;width:187px;height:139px;background:#fff;border:1px solid #cdcdcd"></div>
<div class="a" style="left:1005px;top:587px;width:176px;height:15px;background:linear-gradient(#f8f8f8,#e8e8e8);border-bottom:1px solid #cdcdcd"></div>
<div class="t" style="left:1005px;width:17.5px;top:588.5px;text-align:center;font-size:13px;overflow:hidden">BP</div>
<div class="t" style="left:1022.5px;width:56.799999999999955px;top:588.5px;text-align:center;font-size:13px;overflow:hidden">Addr</div>
<div class="t" style="left:1079.3px;width:41.299999999999955px;top:588.5px;text-align:center;font-size:13px;overflow:hidden">Stage</div>
<div class="t" style="left:1120.6px;width:60.90000000000009px;top:588.5px;text-align:center;font-size:13px;overflow:hidden">nstructior</div>
<div class="a" style="left:1022px;top:587px;width:1px;height:138px;background:#dcdcdc"></div>
<div class="a" style="left:1079px;top:587px;width:1px;height:138px;background:#dcdcdc"></div>
<div class="a" style="left:1121px;top:587px;width:1px;height:138px;background:#dcdcdc"></div>
<div class="a" style="left:1007.5px;top:608.0px;width:10px;height:10px;background:#fff;border:1px solid #c6c6c6"></div>
<div class="t" style="left:1025.5px;top:606.5px;font-size:13px">0x10278</div>
<div class="t" style="left:1124px;top:606.5px;font-size:13px">addi x...</div>
<div class="a" style="left:1005px;top:625px;width:176px;height:1px;background:#dcdcdc"></div>
<div class="a" style="left:1007.5px;top:630.03px;width:10px;height:10px;background:#fff;border:1px solid #c6c6c6"></div>
<div class="t" style="left:1025.5px;top:628.53px;font-size:13px">0x1027c</div>
<div class="t" style="left:1124px;top:628.53px;font-size:13px">jal x0 ...</div>
<div class="a" style="left:1005px;top:647px;width:176px;height:1px;background:#dcdcdc"></div>
<div class="a" style="left:1007.5px;top:652.06px;width:10px;height:10px;background:#fff;border:1px solid #c6c6c6"></div>
<div class="t" style="left:1025.5px;top:650.56px;font-size:13px">0x10280</div>
<div class="t" style="left:1124px;top:650.56px;font-size:13px">jalr x0 ...</div>
<div class="a" style="left:1005px;top:669px;width:176px;height:1px;background:#dcdcdc"></div>
<div class="a" style="left:1007.5px;top:674.09px;width:10px;height:10px;background:#fff;border:1px solid #c6c6c6"></div>
<div class="t" style="left:1025.5px;top:672.59px;font-size:13px">0x10284</div>
<div class="t" style="left:1082px;top:672.59px;font-size:13px">IF</div>
<div class="t" style="left:1124px;top:672.59px;font-size:13px">auipc x...</div>
<div class="a" style="left:1005px;top:691px;width:176px;height:1px;background:#dcdcdc"></div>
<div class="a" style="left:1007.5px;top:696.12px;width:10px;height:10px;background:#fff;border:1px solid #c6c6c6"></div>
<div class="t" style="left:1025.5px;top:694.62px;font-size:13px">0x10288</div>
<div class="t" style="left:1124px;top:694.62px;font-size:13px">addi x...</div>
<div class="a" style="left:1005px;top:713px;width:176px;height:1px;background:#dcdcdc"></div>
<div class="a" style="left:1007.5px;top:718.15px;width:10px;height:10px;background:#fff;border:1px solid #c6c6c6"></div>
<div class="t" style="left:1025.5px;top:716.65px;font-size:13px">0x1028c</div>
<div class="t" style="left:1124px;top:716.65px;font-size:13px">addi x...</div>
<div class="a" style="left:1005px;top:725.5px;width:187px;height:7px;background:#e6e6e6"></div>
<div class="a" style="left:1004.5px;top:725px;width:187px;height:1px;background:#cdcdcd"></div>
<div class="a" style="left:1181.5px;top:587px;width:10px;height:138px;background:#dedede;border-left:1px solid #e2e2e2"></div>
<div class="a" style="left:1181.5px;top:596px;width:10px;height:20px;background:#f8f8f8"></div>
<svg class="a" style="left:1181px;top:587px" width="10" height="139"><path d="M2 7 L5 4 L8 7 Z" fill="#333"/><path d="M2 131 L5 134 L8 131 Z" fill="#333"/></svg>
<div class="a" style="left:0;top:734px;width:1199px;height:18px;background:#eaeaea"></div>
<svg class="a" style="left:600px;top:44px" width="240" height="14"><path d="M59.5 7 Q63 11.5 67 7" stroke="#e6e6e6" stroke-width="1.4" fill="none"/></svg>
<div class="t" style="left:946px;top:736.5px;font-size:13px">Processor: 5-stage processor</div>
<div class="t" style="left:1129.5px;top:736.5px;font-size:13px">ISA: RV32IM</div>
</body></html>
